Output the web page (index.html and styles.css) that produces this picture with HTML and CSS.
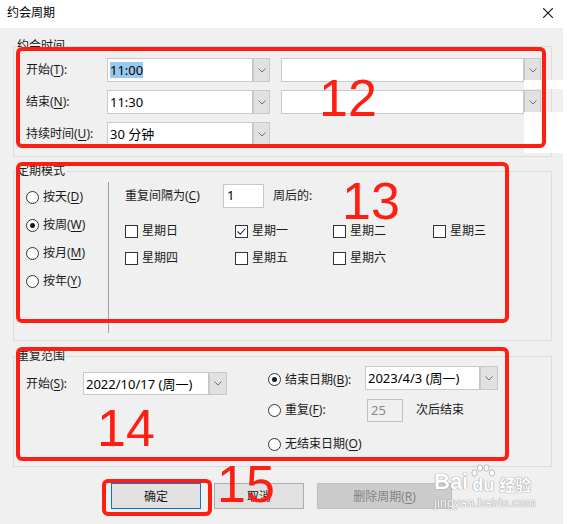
FILE: index.html
```html
<!DOCTYPE html>
<html lang="zh-CN">
<head>
    <meta charset="UTF-8">
    <meta name="viewport" content="width=device-width, initial-scale=1.0">
    <title>约会周期</title>
    <link rel="stylesheet" href="styles.css">
</head>
<body>
<div class="dialog">
    <div class="titlebar">
        <span class="title">约会周期</span>
        <svg class="close" width="10" height="10" viewBox="0 0 10 10"><path d="M0 0L10 10M10 0L0 10" stroke="#111" stroke-width="1.1"/></svg>
    </div>

    <div class="content">
        <!-- 约会时间 -->
        <fieldset class="group time-group">
            <legend>约会时间</legend>
            <div class="time-row">
                <span class="field-label">开始(<u>T</u>):</span>
                <div class="combo">
                    <div class="field time-field"><span class="selected">11:00</span></div>
                    <div class="drop"><svg width="8" height="5" viewBox="0 0 8 5"><path d="M0.5 0.5L4 4L7.5 0.5" fill="none" stroke="#707070"/></svg></div>
                </div>
                <div class="combo wide-combo">
                    <div class="field wide-field"></div>
                    <div class="drop"><svg width="8" height="5" viewBox="0 0 8 5"><path d="M0.5 0.5L4 4L7.5 0.5" fill="none" stroke="#707070"/></svg></div>
                </div>
            </div>
            <div class="time-row">
                <span class="field-label">结束(<u>N</u>):</span>
                <div class="combo">
                    <div class="field time-field">11:30</div>
                    <div class="drop"><svg width="8" height="5" viewBox="0 0 8 5"><path d="M0.5 0.5L4 4L7.5 0.5" fill="none" stroke="#707070"/></svg></div>
                </div>
                <div class="combo wide-combo">
                    <div class="field wide-field"></div>
                    <div class="drop"><svg width="8" height="5" viewBox="0 0 8 5"><path d="M0.5 0.5L4 4L7.5 0.5" fill="none" stroke="#707070"/></svg></div>
                </div>
            </div>
            <div class="time-row">
                <span class="field-label">持续时间(<u>U</u>):</span>
                <div class="combo">
                    <div class="field time-field">30 分钟</div>
                    <div class="drop"><svg width="8" height="5" viewBox="0 0 8 5"><path d="M0.5 0.5L4 4L7.5 0.5" fill="none" stroke="#707070"/></svg></div>
                </div>
            </div>
        </fieldset>

        <!-- 定期模式 -->
        <fieldset class="group pattern-group">
            <legend>定期模式</legend>
            <div class="pattern">
                <div class="freq">
                    <div class="radio-row"><span class="radio"></span><span>按天(<u>D</u>)</span></div>
                    <div class="radio-row"><span class="radio checked"></span><span>按周(<u>W</u>)</span></div>
                    <div class="radio-row"><span class="radio"></span><span>按月(<u>M</u>)</span></div>
                    <div class="radio-row"><span class="radio"></span><span>按年(<u>Y</u>)</span></div>
                </div>
                <div class="divider"></div>
                <div class="weekly">
                    <div class="interval-row">
                        <span class="interval-label">重复间隔为(<u>C</u>)</span>
                        <div class="field interval-field">1</div>
                        <span class="interval-after">周后的:</span>
                    </div>
                    <div class="days">
                        <div class="day"><span class="check"></span><span>星期日</span></div>
                        <div class="day"><span class="check"><svg width="11" height="11" viewBox="0 0 11 11"><path d="M1.5 5.5L4.2 8.2L9.5 2.5" fill="none" stroke="#333" stroke-width="1.1"/></svg></span><span>星期一</span></div>
                        <div class="day"><span class="check"></span><span>星期二</span></div>
                        <div class="day"><span class="check"></span><span>星期三</span></div>
                        <div class="day"><span class="check"></span><span>星期四</span></div>
                        <div class="day"><span class="check"></span><span>星期五</span></div>
                        <div class="day"><span class="check"></span><span>星期六</span></div>
                    </div>
                </div>
            </div>
        </fieldset>

        <!-- 重复范围 -->
        <fieldset class="group range-group">
            <legend>重复范围</legend>
            <div class="range">
                <div class="range-start">
                    <span class="start-label">开始(<u>S</u>):</span>
                    <div class="combo">
                        <div class="field start-field">2022/10/17 (周一)</div>
                        <div class="drop wide-drop"><svg width="8" height="5" viewBox="0 0 8 5"><path d="M0.5 0.5L4 4L7.5 0.5" fill="none" stroke="#707070"/></svg></div>
                    </div>
                </div>
                <div class="range-end">
                    <div class="end-row">
                        <div class="end-option"><span class="radio checked"></span><span>结束日期(<u>B</u>):</span></div>
                        <div class="combo">
                            <div class="field end-field">2023/4/3 (周一)</div>
                            <div class="drop wide-drop"><svg width="8" height="5" viewBox="0 0 8 5"><path d="M0.5 0.5L4 4L7.5 0.5" fill="none" stroke="#707070"/></svg></div>
                        </div>
                    </div>
                    <div class="end-row count-row">
                        <div class="end-option count-option"><span class="radio"></span><span>重复(<u>F</u>):</span></div>
                        <div class="field count-field">25</div>
                        <span class="count-after">次后结束</span>
                    </div>
                    <div class="end-row never-row">
                        <div class="end-option"><span class="radio"></span><span>无结束日期(<u>O</u>)</span></div>
                    </div>
                </div>
            </div>
        </fieldset>

        <div class="buttons">
            <button class="btn default">确定</button>
            <button class="btn">取消</button>
            <button class="btn remove" disabled>删除周期(<u>R</u>)</button>
        </div>
    </div>

    <!-- white strips left over from the dropdown list -->
    <div class="patch patch-top"></div>
    <div class="patch patch-bottom"></div>

    <!-- numbered callouts -->
    <div class="mark mark-12"></div>
    <div class="mark mark-13"></div>
    <div class="mark mark-14"></div>
    <div class="mark mark-15"></div>
    <span class="num num-12">12</span>
    <span class="num num-13">13</span>
    <span class="num num-14">14</span>
    <span class="num num-15">15</span>

    <div class="watermark">
        <div class="wm-logo">
            <span class="wm-bai">Bai</span>
            <span class="wm-paw">
                <svg width="24" height="13" viewBox="0 0 24 13">
                    <ellipse cx="3.5" cy="9" rx="2.6" ry="3.2" fill="#fff" stroke="#a8a8a8" stroke-width="0.8"/>
                    <ellipse cx="9" cy="4" rx="2.6" ry="3.2" fill="#fff" stroke="#a8a8a8" stroke-width="0.8"/>
                    <ellipse cx="15.5" cy="4" rx="2.6" ry="3.2" fill="#fff" stroke="#a8a8a8" stroke-width="0.8"/>
                    <ellipse cx="21" cy="9" rx="2.6" ry="3.2" fill="#fff" stroke="#a8a8a8" stroke-width="0.8"/>
                </svg>
                <span class="wm-du">du</span>
            </span>
            <span class="wm-jy">经验</span>
        </div>
        <div class="wm-url">jingyan.baidu.com</div>
    </div>
</div>
</body>
</html>
```

FILE: styles.css
```css
body {
    margin: 0;
    background-color: #ffffff;
    font-family: "Noto Sans", "Noto Sans CJK SC", sans-serif;
    font-size: 12px;
    color: #1a1a1a;
}

u {
    text-decoration-thickness: 1px;
    text-underline-offset: 2px;
}

.dialog {
    position: relative;
    width: 563px;
    height: 524px;
    background-color: #f0f0f0;
    overflow: hidden;
}

.titlebar {
    height: 28px;
    box-sizing: border-box;
    padding: 0 10px 2px 7px;
    background-color: #ffffff;
    display: flex;
    align-items: center;
    justify-content: space-between;
}

.title {
    font-size: 12px;
    line-height: 16px;
    color: #000000;
}

.content {
    padding: 11px 0 0 13px;
}

/* group boxes */
.group {
    width: 539px;
    min-width: 0;
    box-sizing: border-box;
    margin: 0;
    border: 1px solid #dcdcdc;
}

.group legend {
    font-size: 12px;
    line-height: 14px;
    padding: 0 1px;
    margin-left: -10px;
}

.time-group {
    padding: 5px 0 10px 12px;
}

.pattern-group {
    margin-top: 7px;
    padding: 4px 0 7px 12px;
}

.range-group {
    margin-top: 8px;
    padding: 3px 0 12px 12px;
}

/* combo boxes and edit fields */
.combo {
    display: flex;
    height: 24px;
}

.field {
    box-sizing: border-box;
    height: 24px;
    padding: 0 2px;
    background-color: #ffffff;
    border: 1px solid #c8c8c8;
    font-size: 13px;
    line-height: 20px;
    color: #000000;
    display: flex;
    align-items: center;
    white-space: nowrap;
}

.drop {
    width: 17px;
    box-sizing: border-box;
    background-color: #e1e1e1;
    border: 1px solid #c8c8c8;
    display: flex;
    align-items: center;
    justify-content: center;
}

.wide-drop {
    width: 18px;
}

.selected {
    background-color: #99c9ef;
    line-height: 16px;
}

.time-row {
    display: flex;
    align-items: center;
    height: 24px;
}

.time-row + .time-row {
    margin-top: 8px;
}

.field-label {
    width: 81px;
    line-height: 16px;
}

.time-field {
    width: 146px;
}

.wide-combo {
    margin-left: 11px;
}

.wide-field {
    width: 243px;
}

/* 定期模式 */
.pattern {
    display: flex;
    height: 151px;
}

.freq {
    width: 82px;
    padding-top: 1px;
}

.radio-row {
    display: flex;
    align-items: center;
    gap: 4px;
    height: 28px;
    line-height: 16px;
}

.radio {
    width: 13px;
    height: 13px;
    box-sizing: border-box;
    border: 1px solid #333333;
    border-radius: 50%;
    background-color: #ffffff;
    display: inline-flex;
    align-items: center;
    justify-content: center;
    flex-shrink: 0;
}

.radio.checked::after {
    content: "";
    width: 5px;
    height: 5px;
    border-radius: 50%;
    background-color: #1a1a1a;
}

.divider {
    width: 1px;
    background-color: #a0a0a0;
}

.weekly {
    padding-left: 16px;
}

.interval-row {
    display: flex;
    align-items: center;
    height: 24px;
    margin-top: 2px;
    line-height: 16px;
}

.interval-label {
    width: 98px;
}

.interval-field {
    width: 41px;
    align-items: flex-start;
    padding-left: 3px;
}

.interval-after {
    margin-left: 9px;
}

.days {
    display: grid;
    grid-template-columns: 110px 98px 100px auto;
    grid-auto-rows: 20px;
    row-gap: 7px;
    margin-top: 13px;
}

.day {
    display: flex;
    align-items: center;
    gap: 4px;
    line-height: 16px;
}

.check {
    width: 13px;
    height: 13px;
    box-sizing: border-box;
    border: 1px solid #333333;
    background-color: #ffffff;
    display: inline-flex;
    align-items: center;
    justify-content: center;
}

/* 重复范围 */
.range {
    display: flex;
}

.range-start {
    display: flex;
    align-items: center;
    margin-top: 6px;
    height: 23px;
    align-self: flex-start;
}

.range-start .combo {
    height: 23px;
}

.start-label {
    width: 57px;
    line-height: 16px;
}

.start-field {
    width: 126px;
    height: 23px;
}

.range-end {
    margin-left: 41px;
}

.end-row {
    display: flex;
    align-items: center;
    height: 24px;
}

.end-option {
    display: flex;
    align-items: center;
    gap: 4px;
    width: 97px;
    padding-top: 3px;
    line-height: 16px;
}

.end-field {
    width: 115px;
}

.count-row {
    margin-top: 8px;
}

.count-option {
    width: 99px;
    padding-top: 0;
}

.count-field {
    width: 36px;
    height: 23px;
    background-color: #f0f0f0;
    border-color: #b4c2d2;
    color: #8a8a8a;
    align-items: flex-start;
    padding-left: 3px;
}

.count-after {
    margin-left: 13px;
    line-height: 16px;
}

.never-row {
    margin-top: 12px;
    height: 20px;
}

.never-row .end-option {
    width: auto;
    padding-top: 0;
}

/* dialog buttons */
.buttons {
    display: flex;
    gap: 13px;
    margin: 16px 0 0 98px;
}

.btn {
    width: 90px;
    height: 26px;
    padding: 0;
    background-color: #e1e1e1;
    border: 1px solid #adadad;
    font-family: "Noto Sans", "Noto Sans CJK SC", sans-serif;
    font-size: 12px;
    color: #1a1a1a;
}

.btn.default {
    border-color: #0078d7;
}

.btn.remove {
    width: 135px;
    background-color: #cccccc;
    border-color: #bfbfbf;
    color: #838383;
}

.patch {
    position: absolute;
    left: 524px;
    width: 39px;
    background-color: #ffffff;
}

.patch-top {
    top: 80px;
    height: 9px;
}

.patch-bottom {
    top: 112px;
    height: 41px;
}

/* red callout frames and numbers */
.mark {
    position: absolute;
    box-sizing: border-box;
    border: 4px solid #fe1e12;
    border-radius: 6px;
}

.mark-12 { left: 16px; top: 47px; width: 530px; height: 101px; }
.mark-13 { left: 16px; top: 162px; width: 493px; height: 161px; }
.mark-14 { left: 16px; top: 347px; width: 493px; height: 114px; }
.mark-15 { left: 102px; top: 479px; width: 110px; height: 37px; }

.num {
    position: absolute;
    font-family: "Liberation Sans", sans-serif;
    font-size: 52px;
    line-height: 52px;
    color: #fe1e12;
}

.num-12 { left: 319px; top: 72px; }
.num-13 { left: 342px; top: 175px; }
.num-14 { left: 97px; top: 402px; }
.num-15 { left: 217px; top: 458px; }

/* site watermark */
.watermark {
    position: absolute;
    left: 434px;
    top: 462px;
    color: #ffffff;
    text-shadow: 0 0 1px #8c8c8c, 0 0 1px #8c8c8c;
}

.wm-logo {
    display: flex;
    align-items: flex-end;
    height: 32px;
}

.wm-bai {
    font-family: "Liberation Sans", sans-serif;
    font-weight: bold;
    font-size: 22px;
    line-height: 22px;
    margin-bottom: 1px;
}

.wm-paw {
    display: flex;
    flex-direction: column;
    align-items: center;
    margin-left: 3px;
}

.wm-du {
    font-family: "Liberation Sans", sans-serif;
    font-weight: bold;
    font-size: 18px;
    line-height: 18px;
    margin-top: -1px;
}

.wm-jy {
    font-family: "Noto Sans CJK SC", sans-serif;
    font-weight: bold;
    font-size: 16px;
    line-height: 20px;
    margin-left: 4px;
}

.wm-url {
    font-family: "Liberation Sans", sans-serif;
    font-size: 12px;
    line-height: 14px;
    letter-spacing: 0.3px;
    margin-top: 2px;
}
```
